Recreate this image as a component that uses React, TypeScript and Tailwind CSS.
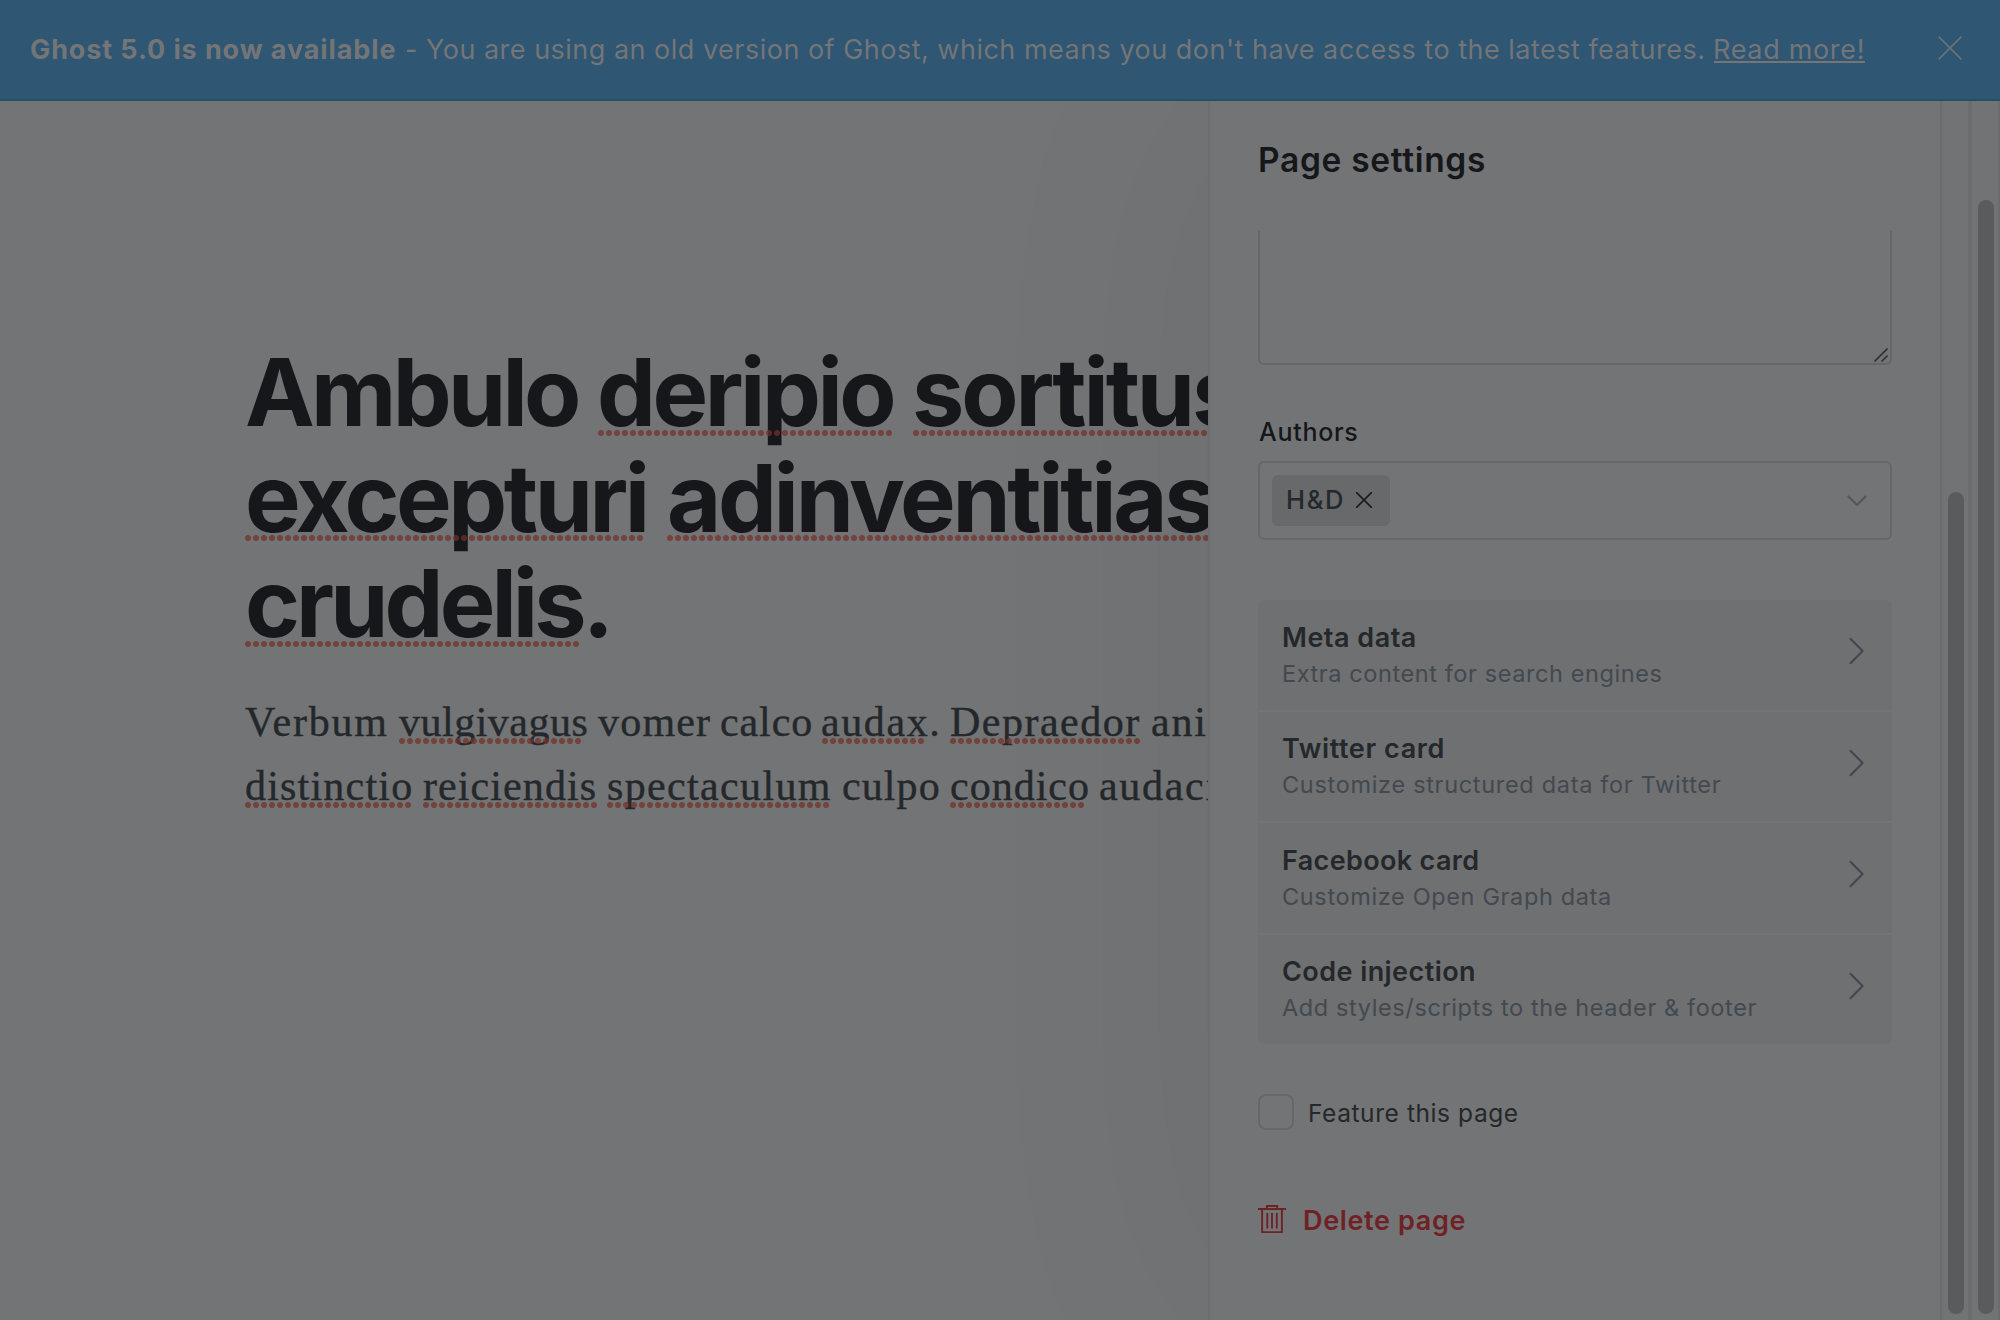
import type { ReactNode } from 'react';

const headingLines = [
  [
    { text: 'Ambulo', box: 'w-[352px] tracking-[-3.7px]', dots: '' },
    { text: 'deripio', box: 'w-[315px] tracking-[-3.45px]', dots: 'w-[294px] left-[1px]' },
    { text: 'sortitus', box: 'w-[320px] tracking-[-3.1px]', dots: 'w-[310px] left-[1px]' },
  ],
  [
    { text: 'excepturi', box: 'w-[422px] tracking-[-3.4px]', dots: 'w-[398px] left-0' },
    { text: 'adinventitias', box: 'w-[560px] tracking-[-3.3px]', dots: 'w-[558px] left-0' },
  ],
  [{ text: 'crudelis.', box: 'w-[380px] tracking-[-3.9px]', dots: 'w-[334px] left-0' }],
];

const paragraphLines = [
  [
    { text: 'Verbum', box: 'w-[154px] tracking-[1.8px]', dots: '' },
    { text: 'vulgivagus', box: 'w-[199px] tracking-[0.5px]', dots: 'w-[182px] left-0' },
    { text: 'vomer', box: 'w-[122px] tracking-[1.2px]', dots: '' },
    { text: 'calco', box: 'w-[101px] tracking-[0.9px]', dots: '' },
    { text: 'audax.', box: 'w-[129px] tracking-[1.6px]', dots: 'w-[102px] left-[1px]' },
    { text: 'Depraedor', box: 'w-[201px] tracking-[1.5px]', dots: 'w-[190px] left-0' },
    { text: 'animi', box: 'w-[120px] tracking-[1.8px]', dots: '' },
  ],
  [
    { text: 'distinctio', box: 'w-[178px] tracking-[1.2px]', dots: 'w-[166px] left-0' },
    { text: 'reiciendis', box: 'w-[184px] tracking-[1.1px]', dots: 'w-[174px] left-0' },
    { text: 'spectaculum', box: 'w-[235px] tracking-[1.35px]', dots: 'w-[222px] left-0' },
    { text: 'culpo', box: 'w-[108px] tracking-[1.1px]', dots: '' },
    { text: 'condico', box: 'w-[149px] tracking-[1px]', dots: 'w-[134px] left-0' },
    { text: 'audacia', box: 'w-[160px] tracking-[1.7px]', dots: '' },
  ],
];

const menu = [
  { title: 'Meta data', titleClass: 'tracking-[0.5px]', sub: 'Extra content for search engines', subClass: 'tracking-[0.59px]' },
  { title: 'Twitter card', titleClass: 'tracking-[0.6px]', sub: 'Customize structured data for Twitter', subClass: 'tracking-[0.69px]' },
  { title: 'Facebook card', titleClass: 'tracking-[0.35px]', sub: 'Customize Open Graph data', subClass: 'tracking-[0.64px]' },
  { title: 'Code injection', titleClass: 'tracking-[0.44px]', sub: 'Add styles/scripts to the header & footer', subClass: 'tracking-[0.61px]' },
];

function Word({ box, dots, dotTop, children }: { box: string; dots: string; dotTop: string; children: ReactNode }) {
  return (
    <span className={`relative block shrink-0 whitespace-nowrap ${box}`}>
      {children}
      {dots && (
        <span
          className={`absolute h-[6px] bg-[radial-gradient(circle_at_3px_3px,rgba(117,48,40,0.72)_2.7px,transparent_3.3px)] bg-[length:8px_6px] bg-repeat-x ${dotTop} ${dots}`}
        />
      )}
    </span>
  );
}

function Banner() {
  return (
    <header className="relative z-20 flex h-[101px] shrink-0 items-center border-b-2 border-[#294d66] bg-[#2f5672] pr-[38px] pl-[30px] text-[27px] leading-[99px] whitespace-nowrap text-[#747577]">
      <b className="w-[375px] font-bold tracking-[0.89px]">Ghost 5.0 is now available</b>
      <span className="w-[21px]">-</span>
      <span className="w-[1287px] tracking-[0.49px]">
        You are using an old version of Ghost, which means you don't have access to the latest features.
      </span>
      <a className="relative tracking-[0.68px]">
        Read more!
        <span className="absolute top-[61px] left-[1px] h-[2px] w-[151px] bg-[#747577]" />
      </a>
      <svg className="mr-0 mb-[3px] ml-auto size-6" viewBox="0 0 24 24" fill="none" stroke="#747577" strokeWidth="1.5">
        <path d="M.5.5l23 23M23.5.5l-23 23" />
      </svg>
    </header>
  );
}

function Editor() {
  return (
    <main className="w-[1208px] shrink-0 overflow-hidden pt-[239px] pl-[245px]">
      <h1 className="text-[93.5px] font-bold text-[#15171a]">
        {headingLines.map((line, i) => (
          <span key={i} className="flex h-[105.5px] leading-[105.5px]">
            {line.map((w) => (
              <Word key={w.text} box={w.box} dots={w.dots} dotTop="top-[89.5px]">
                {w.text}
              </Word>
            ))}
          </span>
        ))}
      </h1>
      <p className="mt-[33px] font-['Liberation_Serif',serif] text-[42px] text-[#24282b] [-webkit-text-stroke:0.4px_#24282b]">
        {paragraphLines.map((line, i) => (
          <span key={i} className="flex h-16 leading-[64px]">
            {line.map((w) => (
              <Word key={w.text} box={w.box} dots={w.dots} dotTop="top-[48px]">
                {w.text}
              </Word>
            ))}
          </span>
        ))}
      </p>
    </main>
  );
}

function Settings() {
  return (
    <section className="w-[730px] pr-12 pl-12">
      <h2 className="h-[130px] text-[33.5px] leading-[118px] font-semibold tracking-[0.68px] text-[#15171a]">
        Page settings
      </h2>
      <div className="flex h-[134px] items-end justify-end rounded-b-[6px] border-x-2 border-b-2 border-[#656769] pr-[2px] pb-[1px]">
        <svg className="size-[14px]" viewBox="0 0 14 14" fill="none" stroke="#303234" strokeWidth="1.6">
          <path d="M.5 13.5l13-13M7.5 13.5l6-6" />
        </svg>
      </div>
      <div className="mt-[52px] ml-px h-[30px] text-[25px] leading-[30px] font-medium tracking-[0.7px] text-[#15171a]">Authors</div>
      <div className="mt-[14px] flex h-[79px] items-center justify-between rounded-[6px] border-2 border-[#656769] pr-[23px] pl-3">
        <div className="flex h-[51px] w-[118px] items-center rounded-[6px] bg-[#67696b] pl-[14px] text-[25.5px] tracking-[1.7px] text-[#24282b]">
          <span className="w-[70px] shrink-0 font-medium">H&amp;D</span>
          <svg className="mb-px size-4 shrink-0" viewBox="0 0 16 16" fill="none" stroke="#191b1e" strokeWidth="1.6">
            <path d="M0 0l16 16M16 0L0 16" />
          </svg>
        </div>
        <svg className="h-3 w-5" viewBox="0 0 20 12" fill="none" stroke="#505459" strokeWidth="1.9">
          <path d="M1 1l9 9 9-9" />
        </svg>
      </div>
      <div className="mt-[60px] flex flex-col gap-[2px] overflow-hidden rounded-[6px]">
        {menu.map((m) => (
          <div key={m.title} className="flex h-[109.5px] justify-between bg-[#6e7072] pt-[19.5px] pr-[28px] pl-6">
            <div>
              <div className={`h-9 text-[27px] leading-9 font-semibold text-[#24282b] ${m.titleClass}`}>{m.title}</div>
              <div className={`text-[23.5px] leading-[35.4px] text-[#42494f] ${m.subClass}`}>{m.sub}</div>
            </div>
            <svg className="mt-[17.5px] h-[28px] w-[15px]" viewBox="0 0 15 28" fill="none" stroke="#40474f" strokeWidth="2" strokeLinecap="round" strokeLinejoin="round">
              <path d="M1.5 1.7L13.6 14 1.5 26.3" />
            </svg>
          </div>
        ))}
      </div>
      <div className="mt-[50px] flex h-9 items-center gap-[14px]">
        <span className="size-9 rounded-[8px] border-2 border-[#656769]" />
        <span className="mt-[2px] text-[24.5px] tracking-[0.58px] text-[#24282b]">Feature this page</span>
      </div>
      <div className="mt-[75px] flex h-7 items-center gap-[17px] text-[#6e2225]">
        <svg className="size-7" viewBox="0 0 28 28" fill="none" stroke="currentColor" strokeWidth="1.9">
          <path d="M0 4h28M8.9 4V1h10.3v3M4.1 4v23.1h19.8V4M9.3 8v15.6M14 8v15.6M18.8 8v15.6" />
        </svg>
        <span className="mt-[4px] text-[27px] leading-7 font-semibold tracking-[0.64px]">Delete page</span>
      </div>
    </section>
  );
}

export default function App() {
  return (
    <div className="flex h-[1320px] w-[2000px] flex-col overflow-hidden bg-[#737476] font-['Inter',sans-serif]">
      <Banner />
      <div className="flex min-h-0 flex-1">
        <Editor />
        <aside className="z-10 flex w-[792px] border-l-2 border-[#6b6d6f] bg-[#737476] shadow-[0_0_250px_rgba(21,23,26,0.055)]">
          <Settings />
          <div className="w-8 shrink-0 border-r-4 border-l-2 border-[#6b6c6f] bg-[#717375] pt-[391px] pl-[6px]">
            <div className="h-[822px] w-4 rounded-full bg-[#5a5b5d]" />
          </div>
          <div className="w-7 shrink-0 border-r-2 border-[#6b6c6f] bg-[#717375] pt-[99px] pl-[6px]">
            <div className="h-[1114px] w-4 rounded-full bg-[#5a5b5d]" />
          </div>
        </aside>
      </div>
    </div>
  );
}
